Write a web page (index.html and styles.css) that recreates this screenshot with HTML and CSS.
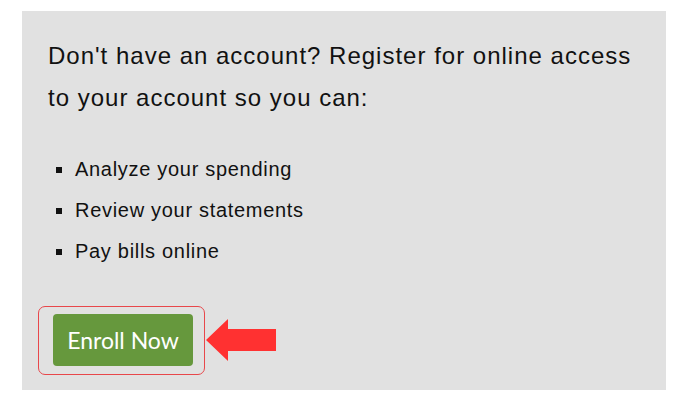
FILE: index.html
```html
<!DOCTYPE html>
<html lang="en">
<head>
    <meta charset="UTF-8">
    <meta name="viewport" content="width=device-width, initial-scale=1.0">
    <title>Register</title>
    <link rel="stylesheet" href="styles.css">
</head>
<body>
    <div class="register-box">
        <p class="intro">Don't have an account? Register for online access to your account so you can:</p>
        <ul class="perks">
            <li>Analyze your spending</li>
            <li>Review your statements</li>
            <li>Pay bills online</li>
        </ul>
        <div class="cta-row">
            <div class="highlight">
                <a href="#" class="enroll-btn">Enroll Now</a>
            </div>
            <svg class="arrow" width="72" height="44" viewBox="0 0 72 44">
                <polygon points="0,21 22,0 22,10 70,10 70,32 22,32 22,42" fill="#ff3131"/>
            </svg>
        </div>
    </div>
</body>
</html>
```

FILE: styles.css
```css
body {
    margin: 0;
    padding: 0;
    background-color: #fff;
    font-family: "Liberation Sans", Arial, sans-serif;
}
.register-box {
    background-color: #e1e1e1;
    margin: 11px 0 0 22px;
    width: 644px;
    height: 379px;
    box-sizing: border-box;
    padding: 24px 16px 0 16px;
}
.intro {
    margin: 0 10px;
    font-size: 24px;
    letter-spacing: 1px;
    line-height: 42px;
    color: #111;
}
.perks {
    margin: 30px 0 0 0;
    padding-left: 37px;
    list-style-type: square;
    font-size: 20px;
    letter-spacing: 0.7px;
    line-height: 41px;
    color: #111;
}
.cta-row {
    display: flex;
    align-items: center;
    margin-top: 34px;
}
.highlight {
    border: 1.5px solid #e8474b;
    border-radius: 7px;
    padding: 7px 11px 8px 14px;
}
.enroll-btn {
    display: block;
    background-color: #66983d;
    color: #fff;
    text-decoration: none;
    font-family: Lato, "Open Sans", sans-serif;
    font-size: 23px;
    width: 140px;
    height: 52px;
    line-height: 52px;
    text-align: center;
    border-radius: 4px;
}
.arrow {
    margin-left: 1px;
}
```
